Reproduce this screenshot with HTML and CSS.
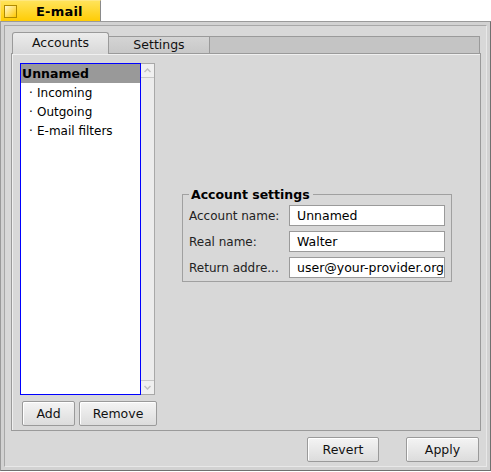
FILE: index.html
```html
<!DOCTYPE html>
<html>
<head>
<meta charset="utf-8">
<link rel="stylesheet" href="styles.css">
</head>
<body>
<div class="wintab"><span class="closebox"></span><span class="title">E-mail</span></div>
<div class="window">
  <div class="frame-inner">
    <div class="content">
      <div class="tabview">
        <div class="tabbar">
          <div class="tab active">Accounts</div>
          <div class="tab">Settings</div>
          <div class="tab-rest"></div>
        </div>
        <div class="tabbox">
          <div class="leftcol">
            <div class="listwrap">
              <div class="list">
                <div class="row selected">Unnamed</div>
                <div class="row sub"><span class="dot">·</span>Incoming</div>
                <div class="row sub"><span class="dot">·</span>Outgoing</div>
                <div class="row sub"><span class="dot">·</span>E-mail filters</div>
              </div>
              <div class="scrollbar">
                <div class="arrow up"><svg width="13" height="13" viewBox="0 0 13 13"><path d="M3.5 8 L6.5 5 L9.5 8" fill="none" stroke="#c0c0c0" stroke-width="1.5"/></svg></div>
                <div class="track"></div>
                <div class="arrow down"><svg width="13" height="13" viewBox="0 0 13 13"><path d="M3.5 5 L6.5 8 L9.5 5" fill="none" stroke="#c0c0c0" stroke-width="1.5"/></svg></div>
              </div>
            </div>
            <div class="listbtns">
              <button class="btn add">Add</button>
              <button class="btn remove">Remove</button>
            </div>
          </div>
          <div class="rightpane">
            <fieldset class="group">
              <legend>Account settings</legend>
              <div class="field"><label>Account name:</label><div class="input">Unnamed</div></div>
              <div class="field"><label>Real name:</label><div class="input">Walter</div></div>
              <div class="field"><label>Return addre...</label><div class="input">user@your-provider.org</div></div>
            </fieldset>
          </div>
        </div>
      </div>
      <div class="bottombtns">
        <button class="btn revert">Revert</button>
        <button class="btn apply">Apply</button>
      </div>
    </div>
  </div>
</div>
</body>
</html>
```
FILE: styles.css
```css
html, body {
  margin: 0;
  padding: 0;
  background: #ffffff;
  width: 491px;
  height: 472px;
  overflow: hidden;
  font-family: "DejaVu Sans", sans-serif;
  font-size: 12px;
  color: #000;
}

.wintab {
  box-sizing: border-box;
  width: 101px;
  height: 22px;
  background: linear-gradient(#ffe35a, #ffcb00);
  border-top: 1px solid #ffe880;
  border-right: 1px solid #8a8a8a;
  border-left: 1px solid #ffe070;
  display: flex;
  align-items: center;
}
.closebox {
  box-sizing: border-box;
  width: 13px;
  height: 13px;
  margin-left: 3px;
  border: 1px solid #b08a00;
  background: linear-gradient(135deg, #fff8d0, #ffc800);
}
.title {
  font-weight: bold;
  font-size: 13px;
  margin-left: 19px;
  letter-spacing: 0.2px;
}

.window {
  box-sizing: border-box;
  width: 491px;
  height: 450px;
  margin-top: -1px;
  border: 1px solid #9a9a9a;
  border-right-color: #707070;
  border-bottom-color: #707070;
  background: #d2d2d2;
  padding: 3px;
}
.frame-inner {
  box-sizing: border-box;
  height: 100%;
  border: 1px solid #a8a8a8;
  border-right-color: #e8e8e8;
  border-bottom-color: #e8e8e8;
}
.content {
  box-sizing: border-box;
  height: 100%;
  background: #d8d8d8;
  padding: 6px 4px 4px 6px;
  display: flex;
  flex-direction: column;
}

.tabview {
  display: flex;
  flex-direction: column;
  height: 399px;
}
.tabbar {
  display: flex;
  align-items: flex-end;
  height: 21px;
  padding-left: 1px;
}
.tab {
  box-sizing: border-box;
  height: 17px;
  width: 101px;
  background: linear-gradient(#d4d4d4, #c8c8c8);
  border: 1px solid #9a9a9a;
  border-bottom: none;
  border-left: none;
  text-align: center;
  font-size: 12.5px;
  line-height: 16px;
  color: #111;
}
.tab.active {
  width: 97px;
  height: 22px;
  background: linear-gradient(#ececec, #d8d8d8);
  border: 1px solid #9a9a9a;
  border-bottom: none;
  border-radius: 3px 3px 0 0;
  line-height: 20px;
  position: relative;
  z-index: 1;
  margin-bottom: -1px;
}
.tab-rest {
  flex: 1;
  box-sizing: border-box;
  height: 17px;
  background: #c4c4c4;
  border-top: 1px solid #9a9a9a;
  border-right: 1px solid #9a9a9a;
  margin-right: 2px;
}
.tabbox {
  box-sizing: border-box;
  height: 378px;
  width: 470px;
  border: 1px solid #9a9a9a;
  box-shadow: inset 1px 1px 0 #f0f0f0;
  display: flex;
  padding: 9px 0 4px 8px;
}

.leftcol {
  display: flex;
  flex-direction: column;
  width: 138px;
}
.listwrap {
  display: flex;
  height: 333px;
}
.list {
  box-sizing: border-box;
  width: 121px;
  border: 1px solid #0000ff;
  background: #fff;
}
.row {
  height: 19px;
  line-height: 20px;
  white-space: nowrap;
}
.row.selected {
  background: #999999;
  font-weight: bold;
  padding-left: 1px;
  font-size: 12.5px;
}
.row.sub {
  padding-left: 8px;
}
.dot {
  display: inline-block;
  width: 8px;
}
.scrollbar {
  box-sizing: border-box;
  width: 14px;
  border: 1px solid #a8a8a8;
  border-left: none;
  background: #ececec;
  display: flex;
  flex-direction: column;
}
.arrow {
  height: 13px;
  background: #f0f0f0;
  line-height: 0;
}
.arrow.up { border-bottom: 1px solid #c8c8c8; }
.arrow.down { border-top: 1px solid #c8c8c8; }
.track { flex: 1; }

.listbtns {
  display: flex;
  gap: 4px;
  margin-top: 6px;
  padding-left: 2px;
}
.btn {
  box-sizing: border-box;
  height: 25px;
  border: 1px solid #9a9a9a;
  border-radius: 2px;
  background: linear-gradient(#f4f4f4, #dcdcdc);
  box-shadow: inset 1px 1px 0 #ffffff;
  font-family: "DejaVu Sans", sans-serif;
  font-size: 12.5px;
  color: #111;
  padding: 0;
}
.btn.add { width: 53px; }
.btn.remove { width: 78px; }

.rightpane {
  flex: 1;
  display: flex;
  align-items: center;
  padding-left: 24px;
  padding-bottom: 20px;
}
.group {
  box-sizing: border-box;
  margin: 0;
  width: 270px;
  border: 1px solid #a0a0a0;
  padding: 1px 5px 0 6px;
}
.group legend {
  font-weight: bold;
  font-size: 12.5px;
  padding: 0 3px 0 2px;
  margin-left: 0;
  line-height: 14px;
}
.field {
  display: flex;
  align-items: center;
  height: 26px;
}
.field label {
  width: 100px;
  color: #222;
  white-space: nowrap;
}
.input {
  box-sizing: border-box;
  width: 156px;
  height: 21px;
  border: 1px solid #9a9a9a;
  background: #fff;
  line-height: 19px;
  padding-left: 7px;
  white-space: nowrap;
  overflow: hidden;
  font-size: 12.5px;
}

.bottombtns {
  display: flex;
  justify-content: flex-end;
  gap: 27px;
  margin-top: 6px;
  padding-right: 3px;
}
.btn.revert { width: 72px; }
.btn.apply { width: 73px; }
```
